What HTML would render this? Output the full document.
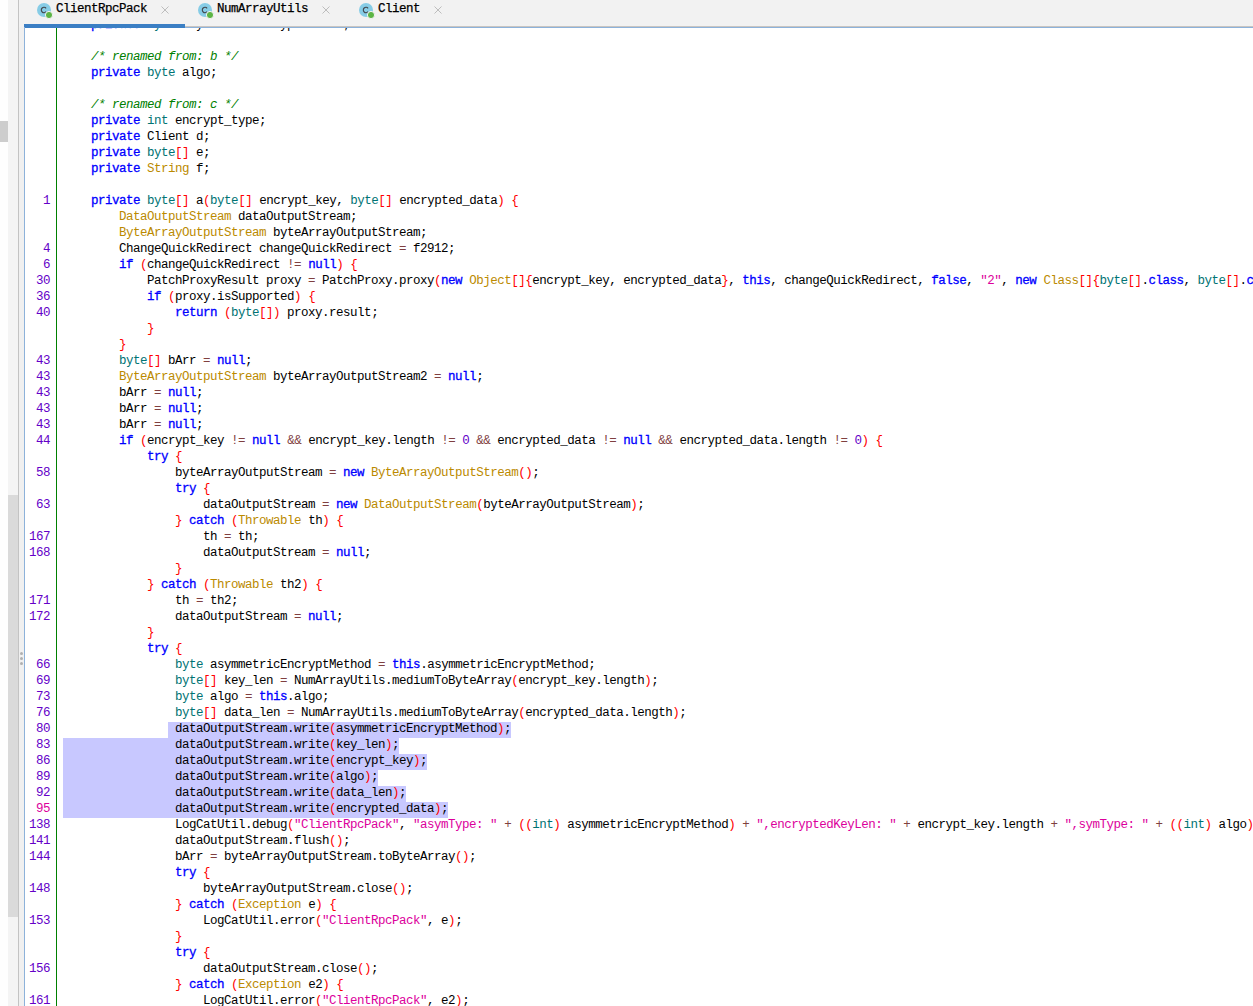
<!DOCTYPE html>
<html><head><meta charset="utf-8">
<style>
*{margin:0;padding:0;box-sizing:border-box}
html,body{width:1253px;height:1006px;overflow:hidden;background:#fff;position:relative}
body{font-family:"Liberation Mono",monospace}
.abs{position:absolute}
#lstrip{left:0;top:0;width:8px;height:1006px;background:#fefefe}
#lblock{left:0;top:121px;width:8px;height:21px;background:#cdcdcd}
#track{left:8px;top:0;width:10px;height:1006px;background:#f4f4f4}
#thumb{left:8px;top:495px;width:10px;height:422px;background:#dadada}
#vline{left:18px;top:0;width:1px;height:1006px;background:#c3c3c3}
#split{left:19px;top:0;width:5px;height:1006px;background:#f0f0f0}
.dot{width:3px;height:3px;border-radius:50%;background:#b0b0b0;left:20px}
#tabs{left:19px;top:0;width:1234px;height:27px;background:#f2f2f2}
#tabline1{left:185px;top:26px;width:1068px;height:1px;background:#c9c5c1}
#tabline2{left:24px;top:27px;width:1229px;height:1px;background:#8db2da}
#active{left:24px;top:24px;width:161px;height:4px;background:#3b7fc4}
#edborder{left:24px;top:27px;width:1px;height:979px;background:#8db2da}
#ed{left:25px;top:28px;width:1228px;height:978px;overflow:hidden;background:#fff}
#gline{left:31px;top:0;width:1px;height:978px;background:#008000}
.r{position:absolute;left:38px;height:16px;line-height:16px;font-size:12.5px;letter-spacing:-0.5px;white-space:pre;color:#000;margin-top:-29px}
.ln{position:absolute;left:0;width:25px;text-align:right;height:16px;line-height:16px;font-size:12.5px;letter-spacing:-0.5px;color:#6400c8;margin-top:-29px}
.ln.cur{color:#dc009c}
.sel{position:absolute;background:#c8c8ff;height:16px}
i{font-style:normal}
i.k{color:#0000ff;font-weight:normal;-webkit-text-stroke:0.3px #0000ff}
i.t{color:#007373}
i.g{color:#bb8a00}
i.c{color:#008000;font-style:italic}
i.s{color:#dc009c}
i.n{color:#6400c8}
i.o{color:#804040}
i.p{color:#ff0000}
.tab{position:absolute;top:0;height:24px}
.ic{position:absolute;top:3px;width:14px;height:14px;border-radius:50%;background:#87cde6}
.ic b{position:absolute;left:3px;top:-1px;font:bold 10px "Liberation Sans",sans-serif;color:#3a3a3a}
.gd{position:absolute;top:12px;width:7px;height:7px;border-radius:50%;background:#5cb545;border:1px solid #f2f2f2;box-sizing:content-box;margin:-1px}
.tl{position:absolute;top:2px;font-weight:normal;-webkit-text-stroke:0.25px #000;font-size:12.5px;letter-spacing:-0.5px;line-height:14px;color:#000;white-space:pre}
.ico{position:absolute;top:3px}
.cx{position:absolute;top:6px;width:8px;height:8px}
</style></head><body>
<div class="abs" id="lstrip"></div>
<div class="abs" id="lblock"></div>
<div class="abs" id="track"></div>
<div class="abs" id="thumb"></div>
<div class="abs" id="vline"></div>
<div class="abs" id="split"></div>
<div class="abs dot" style="top:652px"></div>
<div class="abs dot" style="top:657px"></div>
<div class="abs dot" style="top:662px"></div>
<div class="abs" id="tabs"></div>
<div class="abs" id="tabline1"></div>
<div class="abs" id="tabline2"></div>
<div class="abs" id="active"></div>
<div class="abs" id="edborder"></div>

<!-- tab 1 -->
<svg class="ico" style="left:37px" width="18" height="18" viewBox="0 0 18 18"><circle cx="7" cy="7" r="7" fill="#86cce6"/><path d="M9.1 5.3A2.7 2.7 0 1 0 9.1 8.7" fill="none" stroke="#40464c" stroke-width="1.1"/><circle cx="12" cy="12" r="3.6" fill="#5cb545" stroke="#f2f2f2" stroke-width="1"/></svg>
<div class="tl" style="left:56px">ClientRpcPack</div>
<svg class="cx" style="left:161px" viewBox="0 0 8 8"><path d="M0.5 0.5L7.5 7.5M7.5 0.5L0.5 7.5" stroke="#bdbdbd" stroke-width="1"/></svg>
<!-- tab 2 -->
<svg class="ico" style="left:198px" width="18" height="18" viewBox="0 0 18 18"><circle cx="7" cy="7" r="7" fill="#86cce6"/><path d="M9.1 5.3A2.7 2.7 0 1 0 9.1 8.7" fill="none" stroke="#40464c" stroke-width="1.1"/><circle cx="12" cy="12" r="3.6" fill="#5cb545" stroke="#f2f2f2" stroke-width="1"/></svg>
<div class="tl" style="left:217px">NumArrayUtils</div>
<svg class="cx" style="left:322px" viewBox="0 0 8 8"><path d="M0.5 0.5L7.5 7.5M7.5 0.5L0.5 7.5" stroke="#bdbdbd" stroke-width="1"/></svg>
<!-- tab 3 -->
<svg class="ico" style="left:359px" width="18" height="18" viewBox="0 0 18 18"><circle cx="7" cy="7" r="7" fill="#86cce6"/><path d="M9.1 5.3A2.7 2.7 0 1 0 9.1 8.7" fill="none" stroke="#40464c" stroke-width="1.1"/><circle cx="12" cy="12" r="3.6" fill="#5cb545" stroke="#f2f2f2" stroke-width="1"/></svg>
<div class="tl" style="left:378px">Client</div>
<svg class="cx" style="left:434px" viewBox="0 0 8 8"><path d="M0.5 0.5L7.5 7.5M7.5 0.5L0.5 7.5" stroke="#bdbdbd" stroke-width="1"/></svg>

<div class="abs" id="ed">
<div class="abs" id="gline"></div>
<div class="sel" style="left:143px;top:694px;width:343px"></div>
<div class="sel" style="left:38px;top:710px;width:336px"></div>
<div class="sel" style="left:38px;top:726px;width:364px"></div>
<div class="sel" style="left:38px;top:742px;width:315px"></div>
<div class="sel" style="left:38px;top:758px;width:343px"></div>
<div class="sel" style="left:38px;top:774px;width:385px"></div>
<div class="ln" style="top:194px">1</div>
<div class="ln" style="top:242px">4</div>
<div class="ln" style="top:258px">6</div>
<div class="ln" style="top:274px">30</div>
<div class="ln" style="top:290px">36</div>
<div class="ln" style="top:306px">40</div>
<div class="ln" style="top:354px">43</div>
<div class="ln" style="top:370px">43</div>
<div class="ln" style="top:386px">43</div>
<div class="ln" style="top:402px">43</div>
<div class="ln" style="top:418px">43</div>
<div class="ln" style="top:434px">44</div>
<div class="ln" style="top:466px">58</div>
<div class="ln" style="top:498px">63</div>
<div class="ln" style="top:530px">167</div>
<div class="ln" style="top:546px">168</div>
<div class="ln" style="top:594px">171</div>
<div class="ln" style="top:610px">172</div>
<div class="ln" style="top:658px">66</div>
<div class="ln" style="top:674px">69</div>
<div class="ln" style="top:690px">73</div>
<div class="ln" style="top:706px">76</div>
<div class="ln" style="top:722px">80</div>
<div class="ln" style="top:738px">83</div>
<div class="ln" style="top:754px">86</div>
<div class="ln" style="top:770px">89</div>
<div class="ln" style="top:786px">92</div>
<div class="ln cur" style="top:802px">95</div>
<div class="ln" style="top:818px">138</div>
<div class="ln" style="top:834px">141</div>
<div class="ln" style="top:850px">144</div>
<div class="ln" style="top:882px">148</div>
<div class="ln" style="top:914px">153</div>
<div class="ln" style="top:962px">156</div>
<div class="ln" style="top:994px">161</div>
<div class="r" style="top:18px">    <i class="k">private</i> <i class="t">byte</i> asymmetricEncryptMethod;</div>
<div class="r" style="top:34px"></div>
<div class="r" style="top:50px">    <i class="c">/* renamed from: b */</i></div>
<div class="r" style="top:66px">    <i class="k">private</i> <i class="t">byte</i> algo;</div>
<div class="r" style="top:82px"></div>
<div class="r" style="top:98px">    <i class="c">/* renamed from: c */</i></div>
<div class="r" style="top:114px">    <i class="k">private</i> <i class="t">int</i> encrypt_type;</div>
<div class="r" style="top:130px">    <i class="k">private</i> Client d;</div>
<div class="r" style="top:146px">    <i class="k">private</i> <i class="t">byte</i><i class="p">[]</i> e;</div>
<div class="r" style="top:162px">    <i class="k">private</i> <i class="g">String</i> f;</div>
<div class="r" style="top:178px"></div>
<div class="r" style="top:194px">    <i class="k">private</i> <i class="t">byte</i><i class="p">[]</i> a<i class="p">(</i><i class="t">byte</i><i class="p">[]</i> encrypt_key, <i class="t">byte</i><i class="p">[]</i> encrypted_data<i class="p">)</i> <i class="p">{</i></div>
<div class="r" style="top:210px">        <i class="g">DataOutputStream</i> dataOutputStream;</div>
<div class="r" style="top:226px">        <i class="g">ByteArrayOutputStream</i> byteArrayOutputStream;</div>
<div class="r" style="top:242px">        ChangeQuickRedirect changeQuickRedirect <i class="o">=</i> f2912;</div>
<div class="r" style="top:258px">        <i class="k">if</i> <i class="p">(</i>changeQuickRedirect <i class="o">!=</i> <i class="k">null</i><i class="p">)</i> <i class="p">{</i></div>
<div class="r" style="top:274px">            PatchProxyResult proxy <i class="o">=</i> PatchProxy.proxy<i class="p">(</i><i class="k">new</i> <i class="g">Object</i><i class="p">[]{</i>encrypt_key, encrypted_data<i class="p">}</i>, <i class="k">this</i>, changeQuickRedirect, <i class="k">false</i>, <i class="s">"2"</i>, <i class="k">new</i> <i class="g">Class</i><i class="p">[]{</i><i class="t">byte</i><i class="p">[]</i>.<i class="k">class</i>, <i class="t">byte</i><i class="p">[]</i>.<i class="k">class</i><i class="p">}</i>, <i class="t">byte</i><i class="p">[]</i>.<i class="k">class</i><i class="p">)</i>;</div>
<div class="r" style="top:290px">            <i class="k">if</i> <i class="p">(</i>proxy.isSupported<i class="p">)</i> <i class="p">{</i></div>
<div class="r" style="top:306px">                <i class="k">return</i> <i class="p">(</i><i class="t">byte</i><i class="p">[])</i> proxy.result;</div>
<div class="r" style="top:322px">            <i class="p">}</i></div>
<div class="r" style="top:338px">        <i class="p">}</i></div>
<div class="r" style="top:354px">        <i class="t">byte</i><i class="p">[]</i> bArr <i class="o">=</i> <i class="k">null</i>;</div>
<div class="r" style="top:370px">        <i class="g">ByteArrayOutputStream</i> byteArrayOutputStream2 <i class="o">=</i> <i class="k">null</i>;</div>
<div class="r" style="top:386px">        bArr <i class="o">=</i> <i class="k">null</i>;</div>
<div class="r" style="top:402px">        bArr <i class="o">=</i> <i class="k">null</i>;</div>
<div class="r" style="top:418px">        bArr <i class="o">=</i> <i class="k">null</i>;</div>
<div class="r" style="top:434px">        <i class="k">if</i> <i class="p">(</i>encrypt_key <i class="o">!=</i> <i class="k">null</i> <i class="o">&amp;&amp;</i> encrypt_key.length <i class="o">!=</i> <i class="n">0</i> <i class="o">&amp;&amp;</i> encrypted_data <i class="o">!=</i> <i class="k">null</i> <i class="o">&amp;&amp;</i> encrypted_data.length <i class="o">!=</i> <i class="n">0</i><i class="p">)</i> <i class="p">{</i></div>
<div class="r" style="top:450px">            <i class="k">try</i> <i class="p">{</i></div>
<div class="r" style="top:466px">                byteArrayOutputStream <i class="o">=</i> <i class="k">new</i> <i class="g">ByteArrayOutputStream</i><i class="p">()</i>;</div>
<div class="r" style="top:482px">                <i class="k">try</i> <i class="p">{</i></div>
<div class="r" style="top:498px">                    dataOutputStream <i class="o">=</i> <i class="k">new</i> <i class="g">DataOutputStream</i><i class="p">(</i>byteArrayOutputStream<i class="p">)</i>;</div>
<div class="r" style="top:514px">                <i class="p">}</i> <i class="k">catch</i> <i class="p">(</i><i class="g">Throwable</i> th<i class="p">)</i> <i class="p">{</i></div>
<div class="r" style="top:530px">                    th <i class="o">=</i> th;</div>
<div class="r" style="top:546px">                    dataOutputStream <i class="o">=</i> <i class="k">null</i>;</div>
<div class="r" style="top:562px">                <i class="p">}</i></div>
<div class="r" style="top:578px">            <i class="p">}</i> <i class="k">catch</i> <i class="p">(</i><i class="g">Throwable</i> th2<i class="p">)</i> <i class="p">{</i></div>
<div class="r" style="top:594px">                th <i class="o">=</i> th2;</div>
<div class="r" style="top:610px">                dataOutputStream <i class="o">=</i> <i class="k">null</i>;</div>
<div class="r" style="top:626px">            <i class="p">}</i></div>
<div class="r" style="top:642px">            <i class="k">try</i> <i class="p">{</i></div>
<div class="r" style="top:658px">                <i class="t">byte</i> asymmetricEncryptMethod <i class="o">=</i> <i class="k">this</i>.asymmetricEncryptMethod;</div>
<div class="r" style="top:674px">                <i class="t">byte</i><i class="p">[]</i> key_len <i class="o">=</i> NumArrayUtils.mediumToByteArray<i class="p">(</i>encrypt_key.length<i class="p">)</i>;</div>
<div class="r" style="top:690px">                <i class="t">byte</i> algo <i class="o">=</i> <i class="k">this</i>.algo;</div>
<div class="r" style="top:706px">                <i class="t">byte</i><i class="p">[]</i> data_len <i class="o">=</i> NumArrayUtils.mediumToByteArray<i class="p">(</i>encrypted_data.length<i class="p">)</i>;</div>
<div class="r" style="top:722px">                dataOutputStream.write<i class="p">(</i>asymmetricEncryptMethod<i class="p">)</i>;</div>
<div class="r" style="top:738px">                dataOutputStream.write<i class="p">(</i>key_len<i class="p">)</i>;</div>
<div class="r" style="top:754px">                dataOutputStream.write<i class="p">(</i>encrypt_key<i class="p">)</i>;</div>
<div class="r" style="top:770px">                dataOutputStream.write<i class="p">(</i>algo<i class="p">)</i>;</div>
<div class="r" style="top:786px">                dataOutputStream.write<i class="p">(</i>data_len<i class="p">)</i>;</div>
<div class="r" style="top:802px">                dataOutputStream.write<i class="p">(</i>encrypted_data<i class="p">)</i>;</div>
<div class="r" style="top:818px">                LogCatUtil.debug<i class="p">(</i><i class="s">"ClientRpcPack"</i>, <i class="s">"asymType: "</i> <i class="o">+</i> <i class="p">((</i><i class="t">int</i><i class="p">)</i> asymmetricEncryptMethod<i class="p">)</i> <i class="o">+</i> <i class="s">",encryptedKeyLen: "</i> <i class="o">+</i> encrypt_key.length <i class="o">+</i> <i class="s">",symType: "</i> <i class="o">+</i> <i class="p">((</i><i class="t">int</i><i class="p">)</i> algo<i class="p">)</i> <i class="o">+</i> <i class="s">",encryptedDataLen: "</i> <i class="o">+</i> encrypted_data.length<i class="p">)</i>;</div>
<div class="r" style="top:834px">                dataOutputStream.flush<i class="p">()</i>;</div>
<div class="r" style="top:850px">                bArr <i class="o">=</i> byteArrayOutputStream.toByteArray<i class="p">()</i>;</div>
<div class="r" style="top:866px">                <i class="k">try</i> <i class="p">{</i></div>
<div class="r" style="top:882px">                    byteArrayOutputStream.close<i class="p">()</i>;</div>
<div class="r" style="top:898px">                <i class="p">}</i> <i class="k">catch</i> <i class="p">(</i><i class="g">Exception</i> e<i class="p">)</i> <i class="p">{</i></div>
<div class="r" style="top:914px">                    LogCatUtil.error<i class="p">(</i><i class="s">"ClientRpcPack"</i>, e<i class="p">)</i>;</div>
<div class="r" style="top:930px">                <i class="p">}</i></div>
<div class="r" style="top:946px">                <i class="k">try</i> <i class="p">{</i></div>
<div class="r" style="top:962px">                    dataOutputStream.close<i class="p">()</i>;</div>
<div class="r" style="top:978px">                <i class="p">}</i> <i class="k">catch</i> <i class="p">(</i><i class="g">Exception</i> e2<i class="p">)</i> <i class="p">{</i></div>
<div class="r" style="top:994px">                    LogCatUtil.error<i class="p">(</i><i class="s">"ClientRpcPack"</i>, e2<i class="p">)</i>;</div>
</div>
</body></html>
